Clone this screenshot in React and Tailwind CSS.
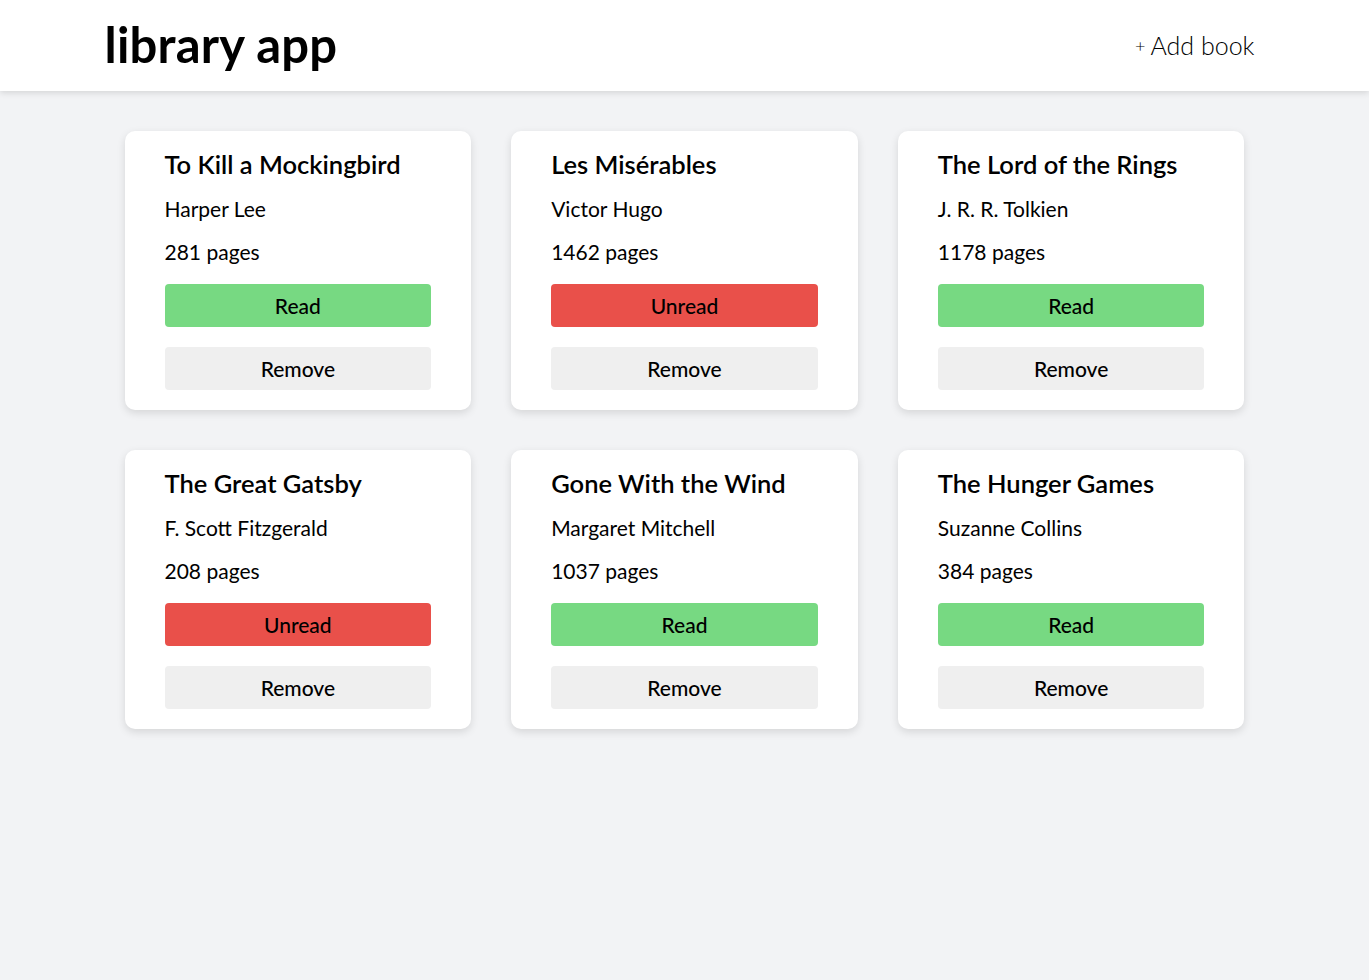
const BOOKS = [
  { title: 'To Kill a Mockingbird', author: 'Harper Lee', pages: 281, read: true },
  { title: 'Les Misérables', author: 'Victor Hugo', pages: 1462, read: false },
  { title: 'The Lord of the Rings', author: 'J. R. R. Tolkien', pages: 1178, read: true },
  { title: 'The Great Gatsby', author: 'F. Scott Fitzgerald', pages: 208, read: false },
  { title: 'Gone With the Wind', author: 'Margaret Mitchell', pages: 1037, read: true },
  { title: 'The Hunger Games', author: 'Suzanne Collins', pages: 384, read: true },
]

function BookCard({ book }) {
  return (
    <div className="bg-white rounded-[10px] shadow-[0_3px_8px_rgba(0,0,0,0.12)] px-10 pt-[19px] pb-5 flex flex-col">
      <h2 className="text-[25.5px] leading-[28px] font-semibold">{book.title}</h2>
      <p className="mt-[19px] text-[21px] leading-6">{book.author}</p>
      <p className="mt-[19px] text-[21px] leading-6">{book.pages} pages</p>
      <button
        className={`mt-5 h-[43px] rounded text-[21px] font-medium ${book.read ? 'bg-[#77d982]' : 'bg-[#e9504a]'}`}
      >
        {book.read ? 'Read' : 'Unread'}
      </button>
      <button className="mt-5 h-[43px] rounded bg-[#efefef] text-[21px] font-medium">Remove</button>
    </div>
  )
}

export default function App() {
  return (
    <div className="min-h-[980px] bg-[#f2f3f5] text-black" style={{ fontFamily: 'Lato, "Open Sans", sans-serif' }}>
      {/* Header */}
      <header className="bg-white h-[91px] shadow-[0_2px_6px_rgba(0,0,0,0.12)] relative">
        <div className="max-w-[1160px] mx-auto h-full flex items-center justify-between">
          <h1 className="text-[49px] font-bold tracking-[0.2px] leading-none pb-[2px]">library app</h1>
          <button className="text-[25px] font-light mr-[10px] pt-[1px]">
            <span className="text-[18px] mr-[5px] relative -top-[3px]">+</span>Add book
          </button>
        </div>
      </header>

      {/* Books */}
      <main className="max-w-[1120px] mx-auto pt-10 grid grid-cols-3 gap-10">
        {BOOKS.map(b => (
          <BookCard key={b.title} book={b} />
        ))}
      </main>
    </div>
  )
}
